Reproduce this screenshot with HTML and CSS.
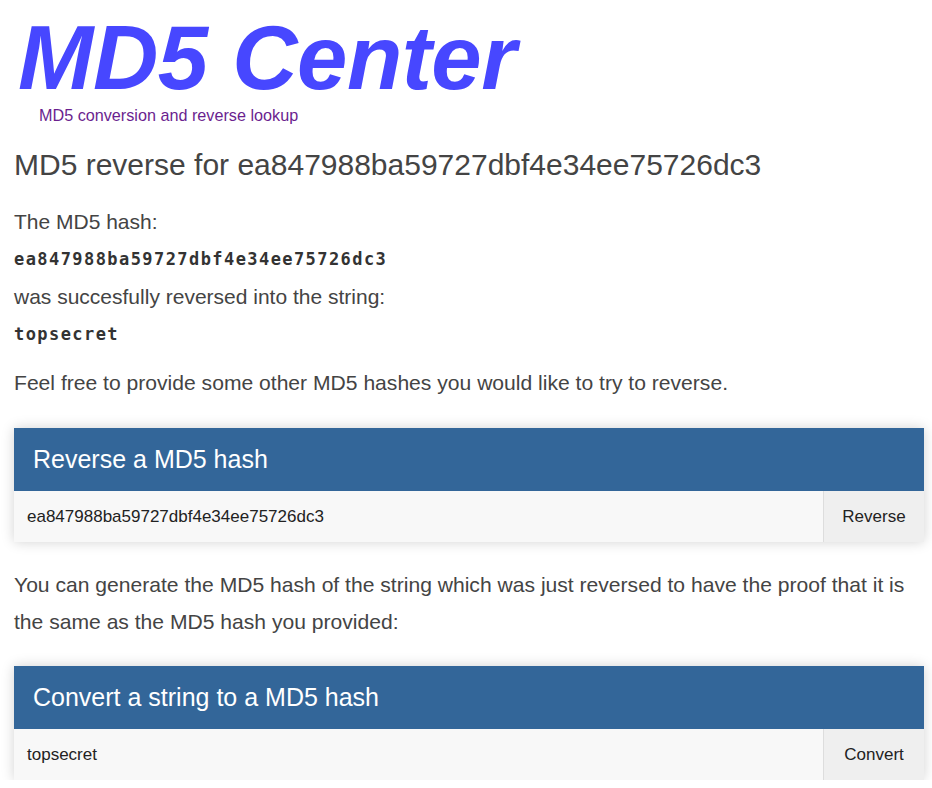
FILE: index.html
```html
<!DOCTYPE html>
<html>
<head>
<meta charset="utf-8">
<link rel="stylesheet" href="styles.css">
</head>
<body>
<div class="page">
  <header class="brand">
    <h1 class="logo">MD5 Center</h1>
    <div class="tagline">MD5 conversion and reverse lookup</div>
  </header>
  <h2 class="title">MD5 reverse for ea847988ba59727dbf4e34ee75726dc3</h2>
  <div class="result">
    <div class="line">The MD5 hash:</div>
    <div class="line code">ea847988ba59727dbf4e34ee75726dc3</div>
    <div class="line">was succesfully reversed into the string:</div>
    <div class="line code">topsecret</div>
  </div>
  <p class="text">Feel free to provide some other MD5 hashes you would like to try to reverse.</p>
  <div class="panel">
    <div class="panel-head">Reverse a MD5 hash</div>
    <div class="panel-row">
      <div class="field">ea847988ba59727dbf4e34ee75726dc3</div>
      <div class="btn">Reverse</div>
    </div>
  </div>
  <p class="text wrap">You can generate the MD5 hash of the string which was just reversed to have the proof that it is the same as the MD5 hash you provided:</p>
  <div class="panel panel-last">
    <div class="panel-head">Convert a string to a MD5 hash</div>
    <div class="panel-row">
      <div class="field">topsecret</div>
      <div class="btn">Convert</div>
    </div>
  </div>
</div>
</body>
</html>
```
FILE: styles.css
```css
html, body {
  margin: 0;
  padding: 0;
  background: #fff;
}
body {
  font-family: "Liberation Sans", Arial, sans-serif;
  color: #444;
  overflow: hidden;
}
.page {
  padding: 0 8px 0 14px;
}
.logo {
  margin: 18px 0 0 4px;
  font-size: 90.5px;
  line-height: 80px;
  font-weight: bold;
  font-style: italic;
  color: #4747ff;
  letter-spacing: -0.5px;
}
.tagline {
  margin: 8px 0 0 25px;
  font-size: 16.2px;
  line-height: 18px;
  color: #6b1f8f;
}
.title {
  margin: 21px 0 0 0;
  font-size: 30px;
  line-height: 40px;
  font-weight: normal;
  color: #444;
}
.result {
  margin-top: 18px;
}
.line {
  font-size: 21px;
  line-height: 37.5px;
}
.code {
  font-family: "DejaVu Sans Mono", monospace;
  font-weight: bold;
  font-size: 17px;
  letter-spacing: 1.43px;
  color: #333;
}
.text {
  margin: 11px 0 0 0;
  font-size: 21.1px;
  line-height: 37.5px;
}
.panel {
  margin-top: 26px;
  box-shadow: 0 0 12px rgba(0, 0, 0, 0.18);
}
.panel-last {
  margin-top: 25px;
}
.panel-head {
  background: #336699;
  color: #fff;
  font-size: 25px;
  height: 63px;
  line-height: 63px;
  padding-left: 19px;
}
.panel-row {
  display: flex;
  height: 51px;
}
.field {
  flex: 1;
  background: #f8f8f8;
  font-size: 17px;
  line-height: 51px;
  padding-left: 13px;
  color: #222;
}
.btn {
  width: 100px;
  border-left: 1px solid #ddd;
  background: #efefef;
  font-size: 17px;
  line-height: 51px;
  text-align: center;
  color: #222;
}
.wrap {
  margin-top: 24px;
}
```
